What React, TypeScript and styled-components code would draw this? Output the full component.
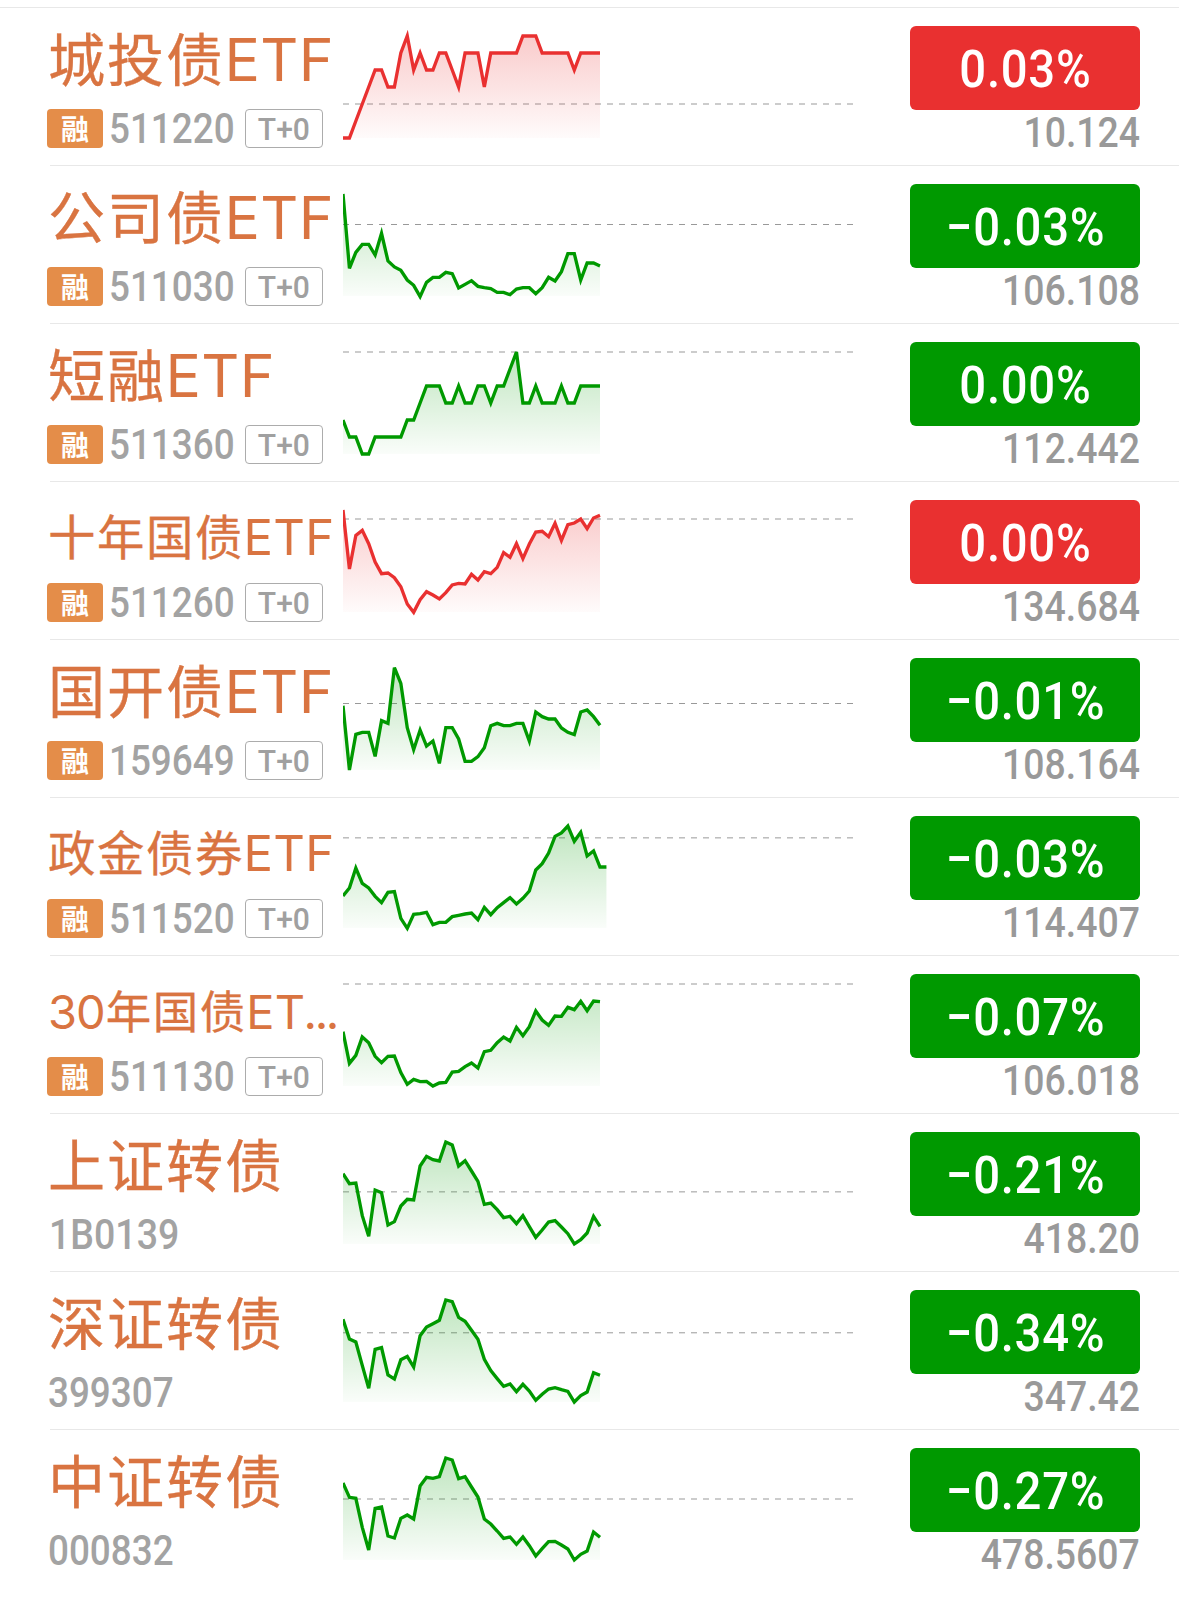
import React from 'react';
import styled, { createGlobalStyle } from 'styled-components';

const RED = '#e93030';
const GREEN = '#009900';

const GlobalStyle = createGlobalStyle`
  html, body { margin: 0; background: #fff; overflow: hidden; }
  * { box-sizing: border-box; }
`;

type Quote = {
  name: string;
  latin?: string;
  lead?: string;
  ellipsis?: boolean;
  size?: number;
  code: string;
  codeScale?: number;
  fund?: boolean;
  change: string;
  price: string;
  up?: boolean;
  base: number;
  points: number[];
};

const quotes: Quote[] = [
  { name: '城投债', latin: 'ETF', code: '511220', fund: true, change: '0.03%', price: '10.124', up: true, base: 291,
    points: [393,393,342,291,240,189,189,240,240,138,87,189,138,189,189,138,138,189,240,138,138,138,240,138,138,138,138,138,87,87,87,138,138,138,138,138,189,138,138,138,138] },
  { name: '公司债', latin: 'ETF', code: '511030', fund: true, change: '−0.03%', price: '106.108', base: 178.5,
    points: [87,310,262,238,238,270,205,288,306,316,345,361,395,352,337,337,322,326,369,358,347,364,368,371,382,382,389,372,368,368,386,368,337,348,320,266,266,345,294,294,303] },
  { name: '短融', latin: 'ETF', code: '511360', fund: true, change: '0.00%', price: '112.442', base: 87,
    points: [291,342,342,393,393,342,342,342,342,342,291,291,240,189,189,189,240,240,189,240,240,189,189,240,189,189,138,87,240,240,189,240,240,240,189,240,240,189,189,189,189] },
  { name: '十年国债', latin: 'ETF', size: 49, code: '511260', fund: true, change: '0.00%', price: '134.684', up: true, base: 114,
    points: [87,264,163,148,188,243,278,276,290,317,369,394,356,332,342,354,335,312,307,309,280,297,272,278,259,215,229,188,233,189,153,151,167,127,178,131,126,114,143,111,103] },
  { name: '国开债', latin: 'ETF', code: '159649', fund: true, change: '−0.01%', price: '108.164', base: 193.5,
    points: [200,393,286,280,280,352,245,253,86,133,266,332,273,321,306,373,266,266,300,367,367,353,326,260,253,260,260,253,253,306,219,233,240,240,267,280,287,219,213,233,259] },
  { name: '政金债券', latin: 'ETF', size: 49, code: '511520', fund: true, change: '−0.03%', price: '114.407', base: 122.6,
    points: [297,273,213,259,273,298,317,286,284,364,394,352,350,346,383,376,376,359,355,351,348,368,331,353,332,317,302,321,304,282,219,200,168,118,108,87,133,106,177,162,210,210] },
  { lead: '30', name: '年国债', latin: 'ET', ellipsis: true, size: 47, code: '511130', fund: true, change: '−0.07%', price: '106.018', base: 87,
    points: [230,325,301,246,263,304,323,304,303,353,388,373,380,379,393,384,382,351,349,335,324,339,290,286,263,246,258,217,242,215,168,195,211,183,184,157,164,139,167,138,140] },
  { name: '上证转债', code: '1B0139', codeScale: 0.893, change: '−0.21%', price: '418.20', base: 236.6,
    points: [182,212,210,308,370,231,239,336,326,279,259,261,159,130,140,144,87,96,159,143,174,205,274,270,290,314,310,332,308,341,373,351,327,323,342,362,393,380,360,310,340] },
  { name: '深证转债', code: '399307', change: '−0.34%', price: '347.42', base: 185.4,
    points: [145,204,213,283,352,235,230,312,324,266,256,288,194,168,158,148,87,92,139,151,178,205,265,299,323,346,339,362,340,360,388,370,354,350,356,361,393,374,363,305,313] },
  { name: '中证转债', code: '000832', change: '−0.27%', price: '478.5607', base: 210,
    points: [162,205,208,295,363,238,234,321,327,268,258,270,171,145,148,143,87,93,149,143,174,204,270,285,306,328,324,346,324,350,381,359,338,337,348,360,393,376,366,309,325] },
];

const Page = styled.main`
  width: 1179px;
  height: 1599px;
  padding-top: 7px;
  overflow: hidden;
  background: #fff;
  font-family: Roboto, 'Noto Sans CJK SC', sans-serif;
`;

const Divider = styled.div<{ $full: boolean }>`
  height: 1px;
  margin-left: ${(p) => (p.$full ? 0 : 50)}px;
  background: #e8e8e8;
`;

const Row = styled.section`
  display: grid;
  grid-template-columns: 343px 510px 1fr;
  height: 157px;
`;

const Identity = styled.div`
  min-width: 0;
  padding-top: 3px;
`;

const Name = styled.div`
  height: 90px;
  padding-left: 48px;
  line-height: 90px;
  font-family: 'Noto Sans CJK SC', sans-serif;
  font-size: 59px;
  color: #d97441;
  white-space: nowrap;
`;

const NameText = styled.span<{ $size: number }>`
  font-size: ${(p) => p.$size * 0.968}px;
  letter-spacing: ${(p) => p.$size * 0.032}px;
  line-height: 1;
  -webkit-text-stroke: 0.3px #d97441;
`;

const Latin = styled.span<{ $size: number }>`
  margin-left: -0.5px;
  font-family: Inter, 'Noto Sans CJK SC', sans-serif;
  font-size: ${(p) => p.$size}px;
  letter-spacing: 0.4px;
  -webkit-text-stroke: 0;
`;

const Lead = styled(Latin)`
  margin-left: 0;
  margin-right: 1px;
  letter-spacing: -1px;
`;

const Ellipsis = styled(Latin)`
  margin-left: -2px;
  letter-spacing: -2.4px;
`;

const Meta = styled.div`
  display: flex;
  align-items: center;
  height: 39px;
  margin-top: 8px;
  padding-left: 47px;
`;

const MarginTag = styled.span`
  display: flex;
  align-items: center;
  justify-content: center;
  width: 56px;
  height: 39px;
  margin-right: 6px;
  border-radius: 4px;
  background: #e48d49;
  color: #fff;
  font: 700 28px/39px 'Noto Sans CJK SC', sans-serif;
`;

const Condensed = styled.span<{ $scale: number; $origin: string }>`
  display: inline-block;
  transform: scaleX(${(p) => p.$scale});
  transform-origin: ${(p) => p.$origin} center;
  white-space: nowrap;
`;

const Code = styled.span<{ $indent: number }>`
  width: 136px;
  padding-left: ${(p) => p.$indent}px;
  font-size: 42px;
  line-height: 39px;
  font-weight: 500;
  color: #a3a3a3;
`;

const TradeTag = styled.span`
  display: flex;
  align-items: center;
  justify-content: center;
  width: 78px;
  height: 39px;
  padding-top: 1px;
  border: 1px solid #acacac;
  border-radius: 4px;
  color: #a0a0a0;
  font-size: 31px;
  font-weight: 500;
  line-height: 37px;
`;

const Chart = styled.svg`
  display: block;
  width: 510px;
  height: 158px;
  margin-top: -1px;
`;

const Figures = styled.div`
  display: flex;
  flex-direction: column;
  align-items: flex-end;
  padding: 18px 39px 0 0;
`;

const Change = styled.div<{ $up?: boolean }>`
  display: flex;
  align-items: center;
  justify-content: center;
  width: 230px;
  height: 84px;
  padding: 1px 0 0 1px;
  border-radius: 6px;
  background: ${(p) => (p.$up ? RED : GREEN)};
  color: #fff;
  font-size: 52.5px;
  font-weight: 500;
  letter-spacing: 0.8px;
  line-height: 82px;
`;

const Price = styled.div`
  height: 46px;
  font-size: 42px;
  font-weight: 500;
  line-height: 46px;
  color: #999;
`;

const STEP = 19.275;

function Sparkline({ points, base, up, id }: { points: number[]; base: number; up?: boolean; id: string }) {
  const color = up ? RED : GREEN;
  const line = points.map((y, i) => `${(i * STEP).toFixed(1)},${y}`).join(' ');
  const end = ((points.length - 1) * STEP).toFixed(1);
  return (
    <Chart viewBox="0 0 1530 474">
      <defs>
        <linearGradient id={id} gradientUnits="userSpaceOnUse" x1="0" y1="87" x2="0" y2="393">
          <stop offset="0" stopColor={color} stopOpacity="0.25" />
          <stop offset="1" stopColor={color} stopOpacity="0.02" />
        </linearGradient>
      </defs>
      <line x1="0" x2="1530" y1={base} y2={base} stroke="#999" strokeWidth="3" strokeDasharray="18 18" />
      <polygon points={`0,393 ${line} ${end},393`} fill={`url(#${id})`} />
      <polyline points={line} fill="none" stroke={color} strokeWidth="10" />
    </Chart>
  );
}

function QuoteRow({ quote, index }: { quote: Quote; index: number }) {
  const size = quote.size ?? 59;
  const indent = quote.fund ? 0 : quote.codeScale ? 2 : 1;
  return (
    <>
      <Divider $full={index === 0} />
      <Row>
        <Identity>
          <Name>
            <NameText $size={size}>
              {quote.lead && <Lead $size={size}>{quote.lead}</Lead>}
              {quote.name}
              {quote.latin && <Latin $size={size}>{quote.latin}</Latin>}
              {quote.ellipsis && <Ellipsis $size={size}>...</Ellipsis>}
            </NameText>
          </Name>
          <Meta>
            {quote.fund && <MarginTag>融</MarginTag>}
            <Code $indent={indent}>
              <Condensed $scale={quote.codeScale ?? 0.877} $origin="left">{quote.code}</Condensed>
            </Code>
            {quote.fund && (
              <TradeTag>
                <Condensed $scale={0.97} $origin="center">T+0</Condensed>
              </TradeTag>
            )}
          </Meta>
        </Identity>
        <Sparkline points={quote.points} base={quote.base} up={quote.up} id={`fill-${index}`} />
        <Figures>
          <Change $up={quote.up}>
            <Condensed $scale={0.9} $origin="center">{quote.change}</Condensed>
          </Change>
          <Price>
            <Condensed $scale={0.89} $origin="right">{quote.price}</Condensed>
          </Price>
        </Figures>
      </Row>
    </>
  );
}

export default function App() {
  return (
    <>
      <GlobalStyle />
      <Page>
        {quotes.map((quote, index) => (
          <QuoteRow key={quote.code} quote={quote} index={index} />
        ))}
      </Page>
    </>
  );
}
